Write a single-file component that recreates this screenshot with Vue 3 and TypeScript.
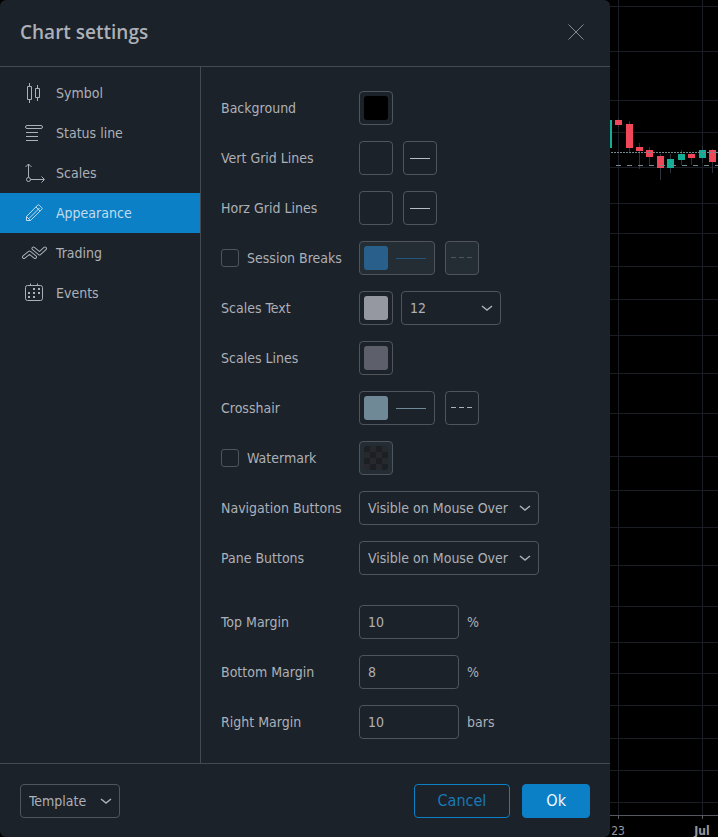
<script setup lang="ts">
import { ref } from 'vue'

type IconName = 'symbol' | 'status' | 'scales' | 'appearance' | 'trading' | 'events'

interface Tab {
  id: IconName
  label: string
}

interface Candle {
  x: number
  top: number
  bottom: number
  high: number
  low: number
  up: boolean
}

const tabs: Tab[] = [
  { id: 'symbol', label: 'Symbol' },
  { id: 'status', label: 'Status line' },
  { id: 'scales', label: 'Scales' },
  { id: 'appearance', label: 'Appearance' },
  { id: 'trading', label: 'Trading' },
  { id: 'events', label: 'Events' },
]
const activeTab = ref<IconName>('appearance')

const sessionBreaks = ref(false)
const watermark = ref(false)
const textSize = ref('12')
const navigationButtons = ref('Visible on Mouse Over')
const paneButtons = ref('Visible on Mouse Over')
const template = ref('Template')
const visibility: string[] = ['Visible on Mouse Over', 'Always Visible', 'Always Invisible']
const textSizes: string[] = ['10', '11', '12', '14', '16', '20']

const margins = ref([
  { id: 'top', label: 'Top Margin', value: '10', unit: '%' },
  { id: 'bottom', label: 'Bottom Margin', value: '8', unit: '%' },
  { id: 'right', label: 'Right Margin', value: '10', unit: 'bars' },
])

const priceLines: number[] = [
  6, 51, 100, 132, 167, 203, 233, 266, 299, 335, 373, 413, 456, 490, 527, 565, 606, 642, 673, 705, 738, 770, 802,
]
const timeLines: number[] = [8, 92]
const candles: Candle[] = [
  { x: -5, top: 120, bottom: 148, high: 118, low: 150, up: true },
  { x: 5, top: 120, bottom: 125, high: 118, low: 127, up: false },
  { x: 16, top: 124, bottom: 148, high: 121, low: 153, up: false },
  { x: 26, top: 147, bottom: 151, high: 143, low: 169, up: false },
  { x: 36, top: 150, bottom: 157, high: 147, low: 166, up: false },
  { x: 47, top: 156, bottom: 168, high: 154, low: 180, up: false },
  { x: 57, top: 159, bottom: 168, high: 154, low: 173, up: true },
  { x: 68, top: 154, bottom: 160, high: 150, low: 165, up: true },
  { x: 78, top: 154, bottom: 158, high: 153, low: 165, up: false },
  { x: 89, top: 150, bottom: 158, high: 146, low: 163, up: true },
  { x: 99, top: 150, bottom: 162, high: 149, low: 173, up: false },
]
</script>

<template>
  <div class="screen">
    <section class="dialog" role="dialog" aria-labelledby="dialog-title">
      <header class="head">
        <h1 id="dialog-title">Chart settings</h1>
        <button class="close" type="button" aria-label="Close">
          <svg width="18" height="18" viewBox="0 0 18 18"><path d="M1.5 1.5l15 15m0-15l-15 15" /></svg>
        </button>
      </header>

      <div class="body">
        <nav class="tabs">
          <button
            v-for="tab in tabs"
            :key="tab.id"
            type="button"
            class="tab"
            :class="{ active: tab.id === activeTab }"
            @click="activeTab = tab.id"
          >
            <svg class="icon" width="28" height="28" viewBox="0 0 28 28">
              <path
                v-if="tab.id === 'symbol'"
                d="M7.5 7.5h4v13h-4zM9.5 4v3.5M9.5 20.5V24M15.5 9.5h4v9h-4zM17.5 6v3.5M17.5 18.5V22"
              />
              <g v-else-if="tab.id === 'status'">
                <rect x="5.5" y="6.5" width="17" height="3" rx="1.5" />
                <path d="M6 13.5h12M6 17.5h12M6 21.5h12" />
              </g>
              <g v-else-if="tab.id === 'scales'">
                <circle cx="8.5" cy="20.5" r="2" />
                <path d="M8.5 18.5V5M5.5 8l3-3 3 3M10.5 20.5H24M21.5 17.5l3 3-3 3" />
              </g>
              <path
                v-else-if="tab.id === 'appearance'"
                d="M6.5 17.5L17.6 6.2a1.2 1.2 0 0 1 1.7 0l2.500 2.500a1.2 1.2 0 0 1 0 1.7L10.5 21.5h-4zM9 19.5L19.5 9M6.5 17.5l4 4M16 8l4 4"
              />
              <g v-else-if="tab.id === 'trading'" class="ribbon">
                <path class="edge" d="M4 18l5.5-4.5L15 18M13.5 9.5l6 5L25 9.5" />
                <path class="fill" d="M4 18l5.5-4.5L15 18M13.5 9.5l6 5L25 9.5" />
              </g>
              <g v-else>
                <path d="M10.5 4.5v2M17.5 4.5v2" />
                <rect x="5.5" y="6.5" width="17" height="15" rx="2" />
                <path class="dots" d="M13 10h2M18 10h2M8 14h2M13 14h2M18 14h2M8 18h2M13 18h2" />
              </g>
            </svg>
            <span>{{ tab.label }}</span>
          </button>
        </nav>

        <form class="settings" @submit.prevent>
          <div class="row">
            <span class="label">Background</span>
            <button class="box" type="button" aria-label="Background color"><i class="swatch black"></i></button>
          </div>

          <div v-for="name in ['Vert Grid Lines', 'Horz Grid Lines']" :key="name" class="row">
            <span class="label">{{ name }}</span>
            <div class="pair">
              <button class="box" type="button" :aria-label="name + ' color'"><i class="swatch"></i></button>
              <button class="box" type="button" :aria-label="name + ' style'"><i class="line"></i></button>
            </div>
          </div>

          <div class="row">
            <label class="label check"><input v-model="sessionBreaks" type="checkbox" />Session Breaks</label>
            <div class="pair">
              <button class="box wide" type="button" aria-label="Session breaks color" :disabled="!sessionBreaks">
                <i class="swatch blue"></i><i class="stroke blue"></i>
              </button>
              <button class="box" type="button" aria-label="Session breaks style" :disabled="!sessionBreaks">
                <svg class="dash" width="22" height="2" viewBox="0 0 22 2"><path d="M0 .5h5m3 0h5m3 0h5" /></svg>
              </button>
            </div>
          </div>

          <div class="row">
            <label class="label" for="text-size">Scales Text</label>
            <div class="pair tight">
              <button class="box" type="button" aria-label="Scales text color"><i class="swatch silver"></i></button>
              <span class="select short">
                <select id="text-size" v-model="textSize">
                  <option v-for="size in textSizes" :key="size">{{ size }}</option>
                </select>
                <svg width="12" height="8" viewBox="0 0 12 8"><path d="M1 2l5 4 5-4" /></svg>
              </span>
            </div>
          </div>

          <div class="row">
            <span class="label">Scales Lines</span>
            <button class="box" type="button" aria-label="Scales lines color"><i class="swatch gray"></i></button>
          </div>

          <div class="row">
            <span class="label">Crosshair</span>
            <div class="pair">
              <button class="box wide" type="button" aria-label="Crosshair color">
                <i class="swatch steel"></i><i class="stroke steel"></i>
              </button>
              <button class="box" type="button" aria-label="Crosshair style">
                <svg class="dash" width="22" height="2" viewBox="0 0 22 2"><path d="M0 .5h5m3 0h5m3 0h5" /></svg>
              </button>
            </div>
          </div>

          <div class="row">
            <label class="label check"><input v-model="watermark" type="checkbox" />Watermark</label>
            <button class="box" type="button" aria-label="Watermark color" :disabled="!watermark">
              <i class="swatch checker"></i>
            </button>
          </div>

          <div class="row">
            <label class="label" for="nav-buttons">Navigation Buttons</label>
            <span class="select long">
              <select id="nav-buttons" v-model="navigationButtons">
                <option v-for="option in visibility" :key="option">{{ option }}</option>
              </select>
              <svg width="12" height="8" viewBox="0 0 12 8"><path d="M1 2l5 4 5-4" /></svg>
            </span>
          </div>

          <div class="row">
            <label class="label" for="pane-buttons">Pane Buttons</label>
            <span class="select long">
              <select id="pane-buttons" v-model="paneButtons">
                <option v-for="option in visibility" :key="option">{{ option }}</option>
              </select>
              <svg width="12" height="8" viewBox="0 0 12 8"><path d="M1 2l5 4 5-4" /></svg>
            </span>
          </div>

          <div class="margins">
            <div v-for="margin in margins" :key="margin.id" class="row">
              <label class="label" :for="'margin-' + margin.id">{{ margin.label }}</label>
              <div class="pair tight">
                <input :id="'margin-' + margin.id" v-model="margin.value" class="number" type="text" inputmode="numeric" />
                <span>{{ margin.unit }}</span>
              </div>
            </div>
          </div>
        </form>
      </div>

      <footer class="foot">
        <span class="select short">
          <select v-model="template" aria-label="Template">
            <option>Template</option>
            <option>Apply Defaults</option>
            <option>Save As…</option>
          </select>
          <svg width="12" height="8" viewBox="0 0 12 8"><path d="M1 2l5 4 5-4" /></svg>
        </span>
        <div class="actions">
          <button class="action cancel" type="button">Cancel</button>
          <button class="action ok" type="button">Ok</button>
        </div>
      </footer>
    </section>

    <svg class="chart" viewBox="0 0 108 837" preserveAspectRatio="xMinYMin slice" aria-label="Price chart">
      <path v-for="y in priceLines" :key="'p' + y" class="grid" :d="`M0 ${y + 0.5}h108`" />
      <path v-for="x in timeLines" :key="'t' + x" class="grid" :d="`M${x + 0.5} 0v815`" />
      <g v-for="c in candles" :key="c.x">
        <path class="wick" :d="`M${c.x + 3.5} ${c.high}V${c.low}`" />
        <rect :class="c.up ? 'up' : 'down'" :x="c.x" :y="c.top" width="7" :height="c.bottom - c.top" />
      </g>
      <path class="price dotted" d="M1 152.5h107" />
      <path class="price dashed" d="M6 165.5h102" />
      <path class="axis" d="M0 815.5h108M8.5 815v4M92.5 815v4" />
      <text x="8" y="835">23</text>
      <text class="month" x="92" y="835">Jul</text>
    </svg>
  </div>
</template>

<style>
body {
  margin: 0;
  background: #000;
}
</style>

<style scoped>
.screen {
  display: flex;
  min-height: 100vh;
  overflow: hidden;
  color: #adb0b8;
  font: 14px/20px 'DejaVu Sans Condensed', 'Noto Sans', sans-serif;
}
button,
input,
select {
  box-sizing: border-box;
  margin: 0;
  color: inherit;
  font: inherit;
}
svg {
  flex: none;
  fill: none;
  stroke: currentColor;
}
.dialog {
  display: flex;
  flex: 1;
  flex-direction: column;
  min-width: 0;
  border-radius: 6px;
  background: #1b2229;
}
.head {
  display: flex;
  align-items: center;
  justify-content: space-between;
  padding: 16px 20px 18px;
  border-bottom: 1px solid #434a52;
}
h1 {
  margin: 0;
  font: 600 19px/32px 'Open Sans', 'Noto Sans', sans-serif;
}
.close {
  display: flex;
  padding: 5px;
  border: 0;
  background: none;
  color: #858991;
}
.body {
  display: flex;
  flex: 1;
}
.tabs {
  flex: none;
  width: 200px;
  padding-top: 6px;
  border-right: 1px solid #434a52;
}
.tab {
  display: flex;
  align-items: center;
  gap: 8px;
  width: 100%;
  height: 40px;
  padding: 0 20px;
  border: 0;
  background: #1b2229;
  text-align: left;
}
.tab.active {
  background: #0b80c7;
  color: #c3dcec;
}
.dots {
  stroke-width: 2;
}
.ribbon {
  stroke-linecap: round;
  stroke-linejoin: round;
}
.edge {
  stroke-width: 4;
}
.fill {
  stroke: #1b2229;
  stroke-width: 2;
}
.settings {
  display: flex;
  flex: 1;
  flex-direction: column;
  gap: 16px;
  padding: 24px 20px;
}
.row {
  display: flex;
  align-items: center;
  height: 34px;
}
.label {
  flex: none;
  width: 138px;
  white-space: nowrap;
}
.check {
  display: flex;
  align-items: center;
  gap: 8px;
}
.check input {
  width: 18px;
  height: 18px;
  border: 1px solid #50545d;
  border-radius: 3px;
  appearance: none;
}
.check input:checked {
  background: #0b80c7;
}
.pair {
  display: flex;
  align-items: center;
  gap: 10px;
}
.pair.tight {
  gap: 8px;
}
.box {
  display: flex;
  align-items: center;
  justify-content: center;
  width: 34px;
  height: 34px;
  padding: 0;
  border: 1px solid #50545d;
  border-radius: 4px;
  background: none;
}
.box.wide {
  justify-content: flex-start;
  gap: 8px;
  width: 76px;
  padding: 0 4px;
}
.box:disabled {
  background: #252d34;
  color: #50545d;
}
.swatch {
  width: 24px;
  height: 24px;
  border-radius: 3px;
}
.black {
  background: #000;
}
.blue {
  background: #285f8b;
}
.silver {
  background: #9598a1;
}
.gray {
  background: #5d606b;
}
.steel {
  background: #6f8996;
}
.checker {
  background: repeating-conic-gradient(#26282e 0 25%, #1c1f24 0 50%) 0 0 / 12px 12px;
}
.line {
  width: 20px;
  height: 1px;
  background: #b9bcc4;
}
.stroke {
  width: 30px;
  height: 1px;
}
.stroke.blue {
  background: #24557c;
}
.select {
  display: grid;
  align-items: center;
}
.select.short {
  width: 100px;
}
.select.long {
  width: 180px;
}
.select select,
.select svg {
  grid-area: 1 / 1;
}
.select svg {
  justify-self: end;
  margin-right: 8px;
  pointer-events: none;
  stroke-width: 1.5;
}
select,
.number {
  width: 100%;
  height: 34px;
  padding: 0 8px;
  border: 1px solid #50545d;
  border-radius: 4px;
  background: none;
  appearance: none;
}
.number {
  width: 100px;
}
option {
  background: #1b2229;
}
.margins {
  display: flex;
  flex-direction: column;
  gap: 16px;
  padding-top: 14px;
}
.foot {
  display: flex;
  align-items: center;
  justify-content: space-between;
  padding: 20px 20px 19px;
  border-top: 1px solid #434a52;
}
.actions {
  display: flex;
  gap: 12px;
}
.action {
  height: 34px;
  padding: 0 23px;
  border: 1px solid #0b80c7;
  border-radius: 4px;
  font-size: 16px;
}
.cancel {
  background: none;
  color: #1a78b5;
}
.ok {
  background: #0b80c7;
  color: #f2f8fc;
}
.chart {
  width: 108px;
  height: 837px;
}
.grid {
  stroke: #1b1d25;
}
.wick {
  stroke: #2b323b;
}
.up {
  fill: #14ae97;
  stroke: none;
}
.down {
  fill: #f0475a;
  stroke: none;
}
.price {
  stroke: #738990;
}
.dotted {
  stroke-dasharray: 2 1;
}
.dashed {
  stroke-dasharray: 5 6;
}
.axis {
  stroke: #555860;
}
.chart text {
  fill: #9598a1;
  stroke: none;
  font-size: 12px;
  text-anchor: middle;
}
.chart .month {
  font-weight: 700;
}
</style>
